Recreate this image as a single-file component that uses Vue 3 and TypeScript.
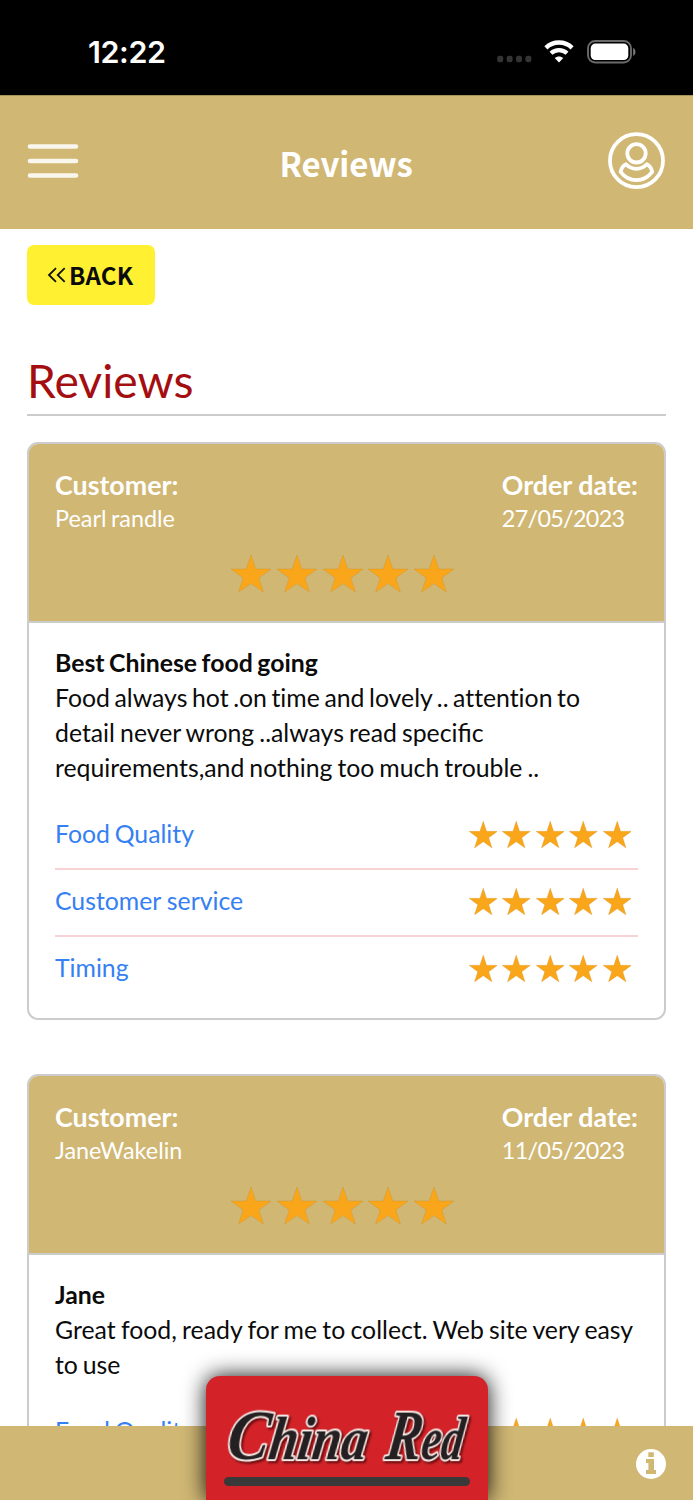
<script setup lang="ts">
interface ReviewLine {
  text: string
  wordSpacing: number
}
interface Review {
  customer: string
  date: string
  title: string
  lines: ReviewLine[]
}
interface Category {
  name: string
  wordSpacing: number
}

const reviews: Review[] = [
  {
    customer: 'Pearl randle',
    date: '27/05/2023',
    title: 'Best Chinese food going',
    lines: [
      { text: 'Food always hot .on time and lovely .. attention to', wordSpacing: -1.75 },
      { text: 'detail never wrong ..always read specific', wordSpacing: -1.2 },
      { text: 'requirements,and nothing too much trouble ..', wordSpacing: -1.35 },
    ],
  },
  {
    customer: 'JaneWakelin',
    date: '11/05/2023',
    title: 'Jane',
    lines: [
      { text: 'Great food, ready for me to collect. Web site very easy', wordSpacing: -1.05 },
      { text: 'to use', wordSpacing: -1.6 },
    ],
  },
]
const categories: Category[] = [
  { name: 'Food Quality', wordSpacing: -1.6 },
  { name: 'Customer service', wordSpacing: -0.3 },
  { name: 'Timing', wordSpacing: 0 },
]
const starPoints = '50,0 61.8,35 100,35 69.5,57 81,92 50,71 19,92 30.5,57 0,35 38.2,35'
</script>

<template>
  <div class="screen">
    <div class="status">
      <span class="clock">12:22</span>
      <div class="indicators">
        <svg class="dots" width="36" height="8" viewBox="0 0 36 8" fill="#343434">
          <rect v-for="n in 4" :key="n" :x="(n - 1) * 9.4 + 0.2" y="0.8" width="6" height="6.4" rx="2.2" />
        </svg>
        <svg class="wifi" width="30" height="23" viewBox="0 0 30 23" fill="none" stroke="#fff">
          <path d="M1.9 7.8C9.2.8 20.8.8 28.1 7.8" stroke-width="4.4" />
          <path d="M7 13.2c4.5-4.2 11.500-4.200 16 0" stroke-width="4.2" />
          <path d="M15 22.500l-4.300-4.400c2.400-2.200 6.200-2.200 8.600 0z" fill="#fff" stroke="none" />
        </svg>
        <svg class="battery" width="50" height="24" viewBox="0 0 50 24">
          <rect x="1" y="1" width="43" height="21.500" rx="7.200" fill="none" stroke="#6a6a6a" stroke-width="1.900" />
          <rect x="3.700" y="3.600" width="37.600" height="16.400" rx="4.600" fill="#fff" />
          <path d="M46.200 8c3 1 3 6.800 0 7.800z" fill="#7a7a7a" />
        </svg>
      </div>
    </div>

    <header class="bar">
      <svg class="menu" width="52" height="38" viewBox="0 0 52 38" stroke="#fff" stroke-width="4.600" stroke-linecap="round">
        <path d="M3 4.500h46M3 19h46M3 33.500h46" opacity=".88" />
      </svg>
      <h2 class="bar-title">Reviews</h2>
      <svg class="user" width="58" height="58" viewBox="0 0 58 58" fill="none" stroke="#fff" stroke-width="3.800">
        <circle cx="29.500" cy="28.700" r="26.500" />
        <circle cx="29.500" cy="21.300" r="9.200" />
        <path d="M19 32.200c5.800 6.100 15 6.100 20.800 0 2.700 1.200 4.700 4.200 5.400 7.700-8.300 11-23.300 11-31.600 0 .7-3.500 2.700-6.500 5.400-7.700z" stroke-linejoin="round" />
      </svg>
    </header>

    <main class="content">
      <button class="back" type="button">
        <svg width="19" height="16" viewBox="0 0 19 16" fill="none" stroke="#111" stroke-width="1.800">
          <path d="M9 1.200L2 8l7 6.800M17.700 1.200L10.700 8l7 6.800" />
        </svg>
        <span>BACK</span>
      </button>
      <h1 class="heading">Reviews</h1>

      <article v-for="review in reviews" :key="review.customer" class="card">
        <div class="card-head">
          <div class="meta">
            <div>
              <div class="label">Customer:</div>
              <div class="value">{{ review.customer }}</div>
            </div>
            <div>
              <div class="label">Order date:</div>
              <div class="value date">{{ review.date }}</div>
            </div>
          </div>
          <div class="overall">
            <svg v-for="n in 5" :key="n" class="star-large" viewBox="0 0 100 92" preserveAspectRatio="none">
              <polygon :points="starPoints" />
            </svg>
          </div>
        </div>
        <div class="card-body">
          <h3 class="review-title">{{ review.title }}</h3>
          <p class="review-text">
            <span
              v-for="line in review.lines"
              :key="line.text"
              class="line"
              :class="{ 'split-ti': line.text.includes('ti') }"
              :style="{ wordSpacing: line.wordSpacing + 'px' }"
            >{{ line.text }}</span>
          </p>
          <div class="ratings">
            <div v-for="category in categories" :key="category.name" class="rating">
              <span class="category" :style="{ wordSpacing: category.wordSpacing + 'px' }">{{ category.name }}</span>
              <div class="stars">
                <svg v-for="n in 5" :key="n" class="star-small" viewBox="0 0 100 92" preserveAspectRatio="none">
                  <polygon :points="starPoints" />
                </svg>
              </div>
            </div>
          </div>
        </div>
      </article>
    </main>

    <footer class="footer">
      <div class="logo-card">
        <svg class="logo" width="282" height="98" viewBox="0 0 282 98">
          <g class="logo-text" transform="skewX(-8)">
            <text x="31" y="83" textLength="140" lengthAdjust="spacingAndGlyphs"><tspan class="initial">C</tspan>hina</text>
            <text x="190" y="83" textLength="77" lengthAdjust="spacingAndGlyphs"><tspan class="initial">R</tspan>ed</text>
          </g>
        </svg>
        <div class="home-indicator"></div>
      </div>
      <svg class="info" width="30" height="30" viewBox="0 0 30 30">
        <circle cx="15" cy="15" r="15" fill="#fff" />
        <path d="M12.300 3.200h5.500v4.700h-5.500zM10 10h8v11h2v4H10v-4h2.400v-7H10z" fill="#d0b774" />
      </svg>
    </footer>
  </div>
</template>

<style>
body {
  margin: 0;
  background: #fff;
}
</style>

<style scoped>
* {
  box-sizing: border-box;
}
h1,
h2,
h3,
p {
  margin: 0;
}
svg {
  display: block;
  flex: none;
}
.screen {
  width: 693px;
  height: 1500px;
  display: flex;
  flex-direction: column;
  overflow: hidden;
  background: #fff;
  font-family: Lato, sans-serif;
  color: #0b0b0b;
}
.status {
  height: 95px;
  flex: none;
  background: #000;
  display: flex;
  justify-content: space-between;
  padding: 0 56px 0 88px;
}
.clock {
  font: 600 30.500px/36px Inter, sans-serif;
  color: #fff;
  margin-top: 34px;
  letter-spacing: -0.4px;
}
.indicators {
  display: flex;
  align-items: flex-start;
  padding-top: 40px;
}
.dots {
  margin-top: 15px;
  margin-right: 11px;
}
.battery {
  margin-left: 13px;
}
.bar {
  height: 134px;
  flex: none;
  background: #d0b774;
  border-top: 1px solid #a7925c;
  display: flex;
  align-items: center;
  justify-content: space-between;
  padding: 0 28px 4px 27px;
}
.bar-title {
  width: 130px;
  font: 700 33px/40px "Noto Sans CJK JP", sans-serif;
  color: #fff;
  letter-spacing: -0.100px;
  margin-top: 4px;
  margin-left: 3px;
}
.content {
  height: 1197px;
  flex: none;
  overflow: hidden;
  padding: 16px 27px 0;
}
.back {
  width: 128px;
  height: 60px;
  display: flex;
  align-items: center;
  gap: 3px;
  border: 0;
  border-radius: 7px;
  background: #fff131;
  padding: 0 0 0 20px;
  color: #0b0b0b;
  font: 700 24px/30px "Noto Sans CJK JP", sans-serif;
  letter-spacing: 0.200px;
}
.heading {
  height: 111px;
  padding-top: 47px;
  border-bottom: 2px solid #ccc;
  color: #a50e11;
  font-size: 46.200px;
  line-height: 57px;
  font-weight: 400;
}
.card {
  margin-top: 26px;
  margin-bottom: 54px;
  border: 2px solid #ccc;
  border-radius: 11px;
  overflow: hidden;
}
.card-head {
  height: 179px;
  padding: 25px 26px 0;
  background: #d0b774;
  border-bottom: 2px solid #ccc;
  color: #fff;
}
.meta {
  display: flex;
  justify-content: space-between;
}
.label {
  font-size: 26.800px;
  line-height: 33px;
  font-weight: 700;
}
.value {
  font-size: 23.400px;
  line-height: 33px;
  word-spacing: -1.500px;
}
.date {
  letter-spacing: -0.700px;
}
.overall {
  display: flex;
  justify-content: center;
  gap: 5.900px;
  margin-top: 20px;
  padding-right: 8px;
}
.star-large {
  width: 40px;
  height: 37px;
}
.star-small {
  width: 28.500px;
  height: 27px;
}
polygon {
  fill: #faa61a;
  stroke: #c98d27;
  stroke-width: 0.8;
}
.card-body {
  padding: 23px 26px 14px;
}
.review-title {
  font-size: 24.800px;
  line-height: 34px;
  font-weight: 700;
  word-spacing: -1.500px;
}
.review-text {
  font-size: 24.800px;
  line-height: 35px;
}
.line {
  display: block;
  white-space: nowrap;
}
.split-ti {
  font-variant-ligatures: none;
}
.ratings {
  margin-top: 18px;
}
.rating {
  height: 67px;
  display: flex;
  align-items: center;
  justify-content: space-between;
  border-bottom: 2px solid #f8d2d5;
  color: #3580f2;
  font-size: 24.800px;
}
.category {
  padding-bottom: 4px;
}
.rating:last-child {
  border-bottom-color: transparent;
}
.stars {
  display: flex;
  gap: 5px;
  margin-right: 7px;
  margin-bottom: 2px;
}
.footer {
  height: 74px;
  flex: none;
  position: relative;
  background: #d0b774;
  display: flex;
  justify-content: flex-end;
  padding: 23px 27px 0;
}
.logo-card {
  position: absolute;
  left: 206px;
  top: -50px;
  width: 282px;
  height: 124px;
  border-radius: 14px 14px 0 0;
  background: #d32329;
  box-shadow: 0 0 22px rgba(0, 0, 0, 0.95);
}
.logo-text {
  font-family: "Liberation Serif", serif;
  font-style: italic;
  font-weight: 700;
  font-size: 60px;
  fill: #242021;
  stroke: #f5e9e6;
  stroke-width: 4px;
  stroke-linejoin: round;
  paint-order: stroke;
  filter: drop-shadow(2px 2px 1px rgba(60, 0, 0, 0.7));
}
.initial {
  font-size: 72px;
}
.home-indicator {
  width: 246px;
  height: 9px;
  margin: 3px 0 0 18px;
  border-radius: 5px;
  background: #393939;
}
</style>
